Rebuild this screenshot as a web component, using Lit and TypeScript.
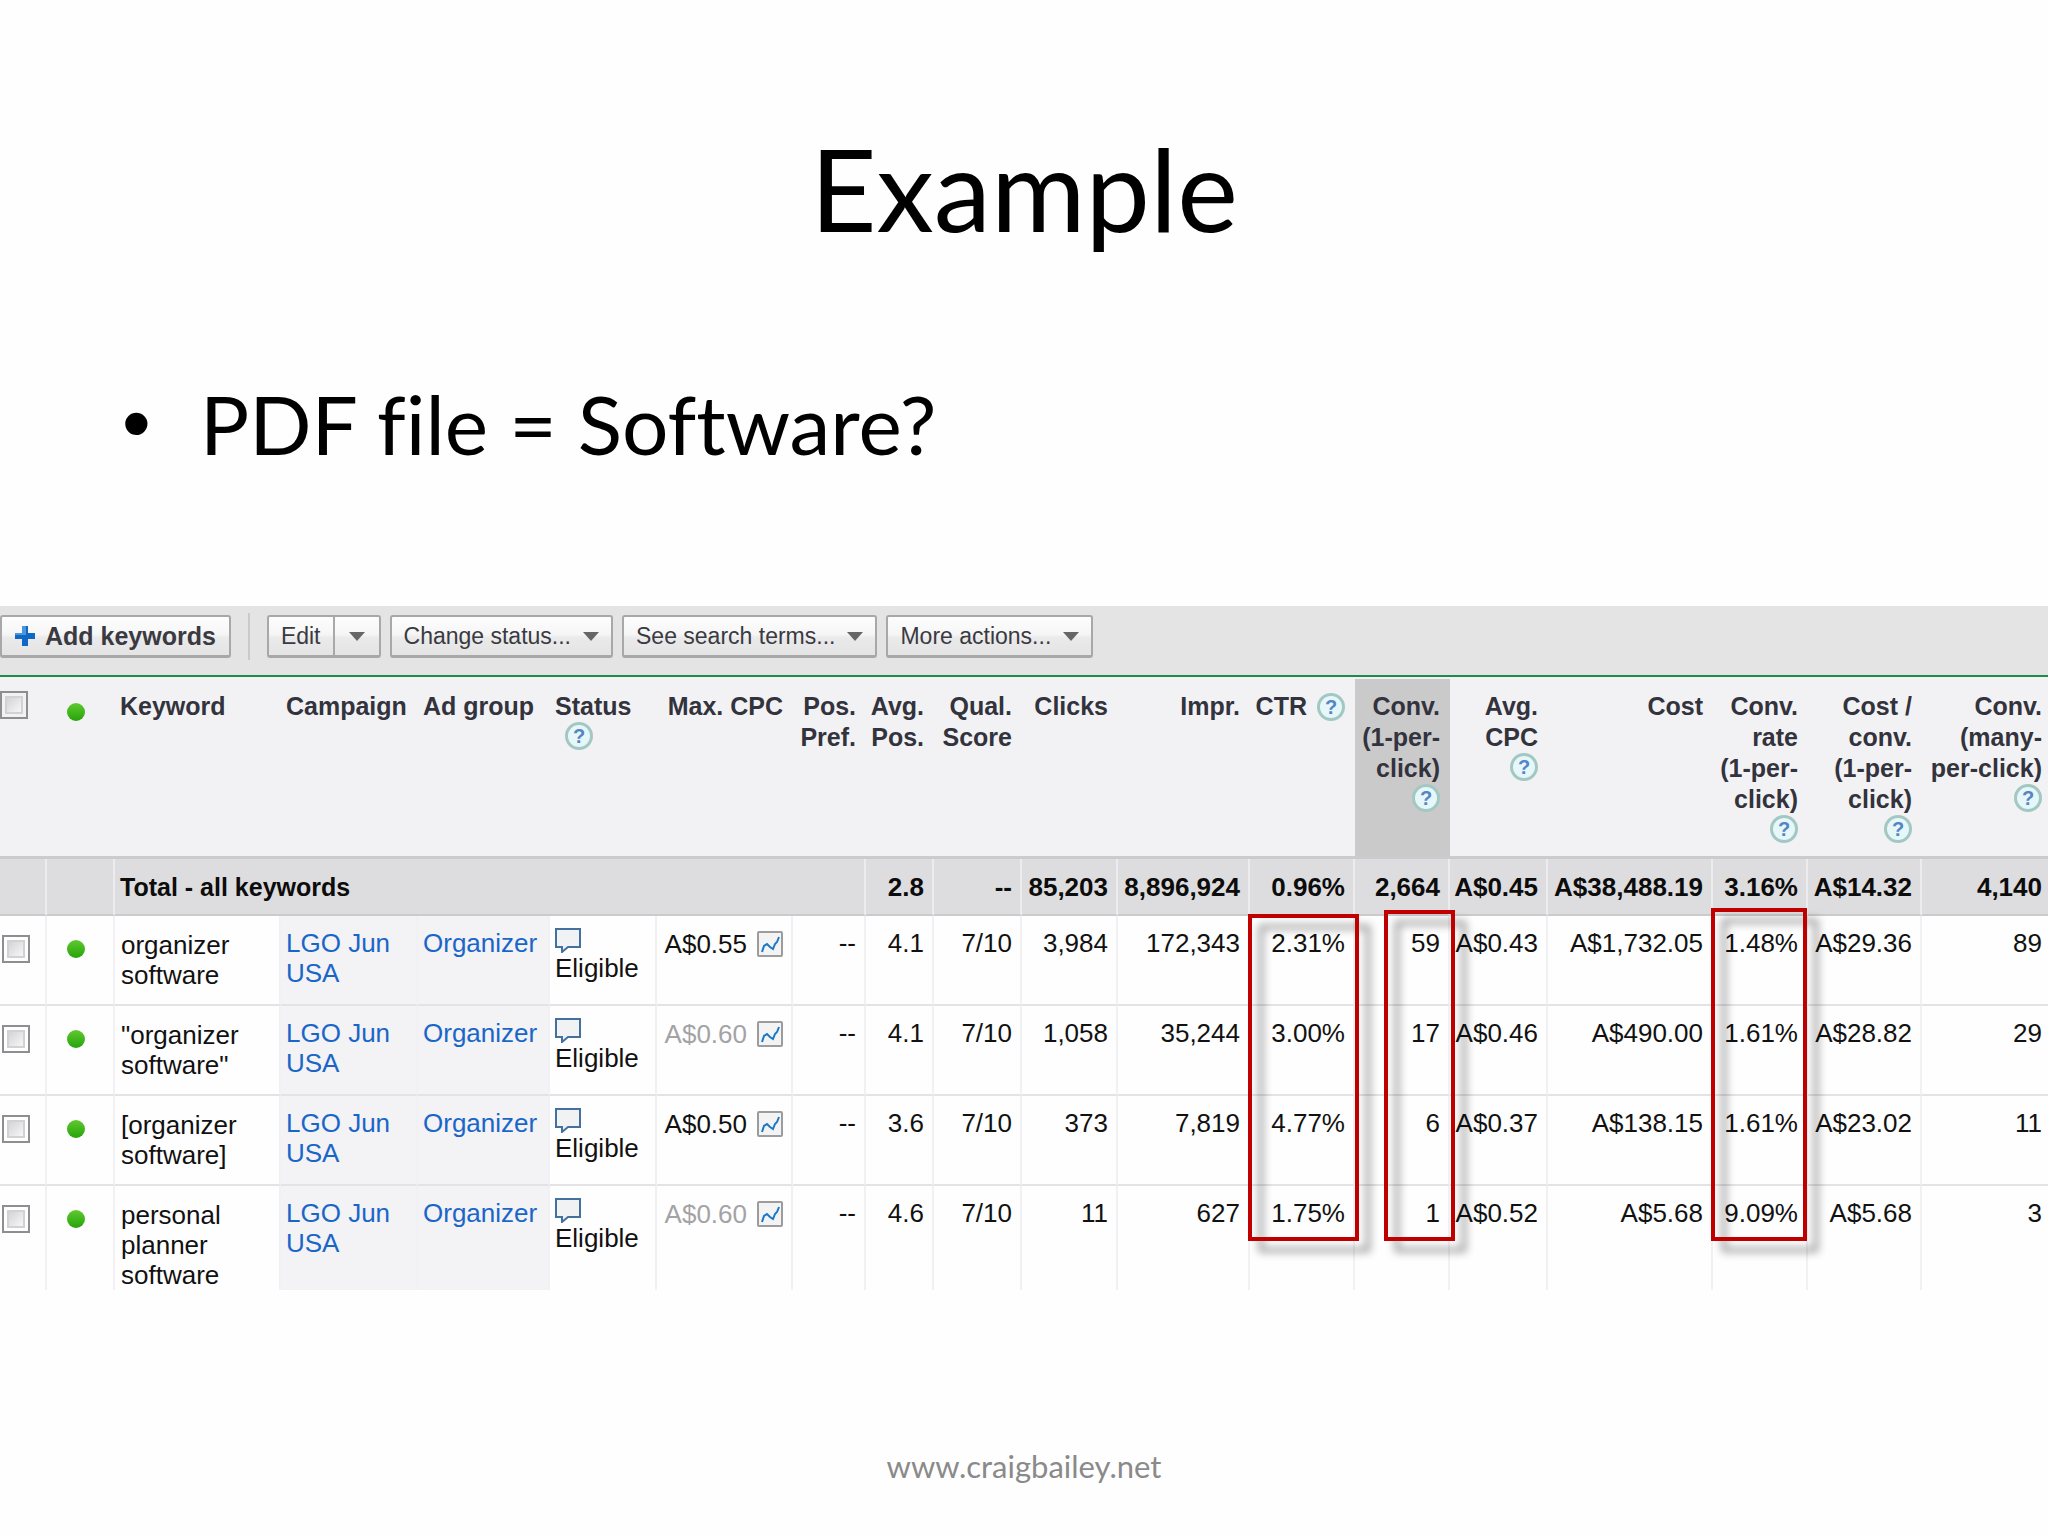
import { LitElement, html, css, svg, nothing } from "lit";
import { customElement } from "lit/decorators.js";
import { classMap } from "lit/directives/class-map.js";

interface Column {
  width: number;
  lines: string[];
  help?: "inline" | "below";
  kind: "check" | "dot" | "text" | "num";
  sorted?: boolean;
}

interface Row {
  keyword: string;
  bid: string;
  inherited: boolean;
  values: string[];
}

const COLUMNS: Column[] = [
  { width: 47, lines: [], kind: "check" },
  { width: 68, lines: [], kind: "dot" },
  { width: 166, lines: ["Keyword"], kind: "text" },
  { width: 137, lines: ["Campaign"], kind: "text" },
  { width: 132, lines: ["Ad group"], kind: "text" },
  { width: 107, lines: ["Status"], kind: "text", help: "below" },
  { width: 136, lines: ["Max. CPC"], kind: "num" },
  { width: 73, lines: ["Pos.", "Pref."], kind: "num" },
  { width: 68, lines: ["Avg.", "Pos."], kind: "num" },
  { width: 88, lines: ["Qual.", "Score"], kind: "num" },
  { width: 96, lines: ["Clicks"], kind: "num" },
  { width: 132, lines: ["Impr."], kind: "num" },
  { width: 105, lines: ["CTR"], kind: "num", help: "inline" },
  { width: 95, lines: ["Conv.", "(1-per-", "click)"], kind: "num", help: "below", sorted: true },
  { width: 98, lines: ["Avg.", "CPC"], kind: "num", help: "below" },
  { width: 165, lines: ["Cost"], kind: "num" },
  { width: 95, lines: ["Conv.", "rate", "(1-per-", "click)"], kind: "num", help: "below" },
  { width: 114, lines: ["Cost /", "conv.", "(1-per-", "click)"], kind: "num", help: "below" },
  { width: 126, lines: ["Conv.", "(many-", "per-click)"], kind: "num", help: "below" },
];

const TOTALS = ["2.8", "--", "85,203", "8,896,924", "0.96%", "2,664", "A$0.45", "A$38,488.19", "3.16%", "A$14.32", "4,140"];

const ROWS: Row[] = [
  {
    keyword: "organizer software",
    bid: "A$0.55",
    inherited: false,
    values: ["--", "4.1", "7/10", "3,984", "172,343", "2.31%", "59", "A$0.43", "A$1,732.05", "1.48%", "A$29.36", "89"],
  },
  {
    keyword: '"organizer software"',
    bid: "A$0.60",
    inherited: true,
    values: ["--", "4.1", "7/10", "1,058", "35,244", "3.00%", "17", "A$0.46", "A$490.00", "1.61%", "A$28.82", "29"],
  },
  {
    keyword: "[organizer software]",
    bid: "A$0.50",
    inherited: false,
    values: ["--", "3.6", "7/10", "373", "7,819", "4.77%", "6", "A$0.37", "A$138.15", "1.61%", "A$23.02", "11"],
  },
  {
    keyword: "personal planner software",
    bid: "A$0.60",
    inherited: true,
    values: ["--", "4.6", "7/10", "11", "627", "1.75%", "1", "A$0.52", "A$5.68", "9.09%", "A$5.68", "3"],
  },
];

/* Value index -> class of the red frame that starts in the first row. */
const MARKS: Record<number, string> = { 5: "mark-ctr", 6: "mark-conv", 9: "mark-rate" };

@customElement("keyword-toolbar")
export class KeywordToolbar extends LitElement {
  static styles = css`
    :host {
      display: flex;
      align-items: center;
      gap: 9px;
      height: 69px;
      box-sizing: border-box;
      padding-bottom: 8px;
      background: #e4e4e4;
    }
    button {
      display: flex;
      align-items: center;
      gap: 12px;
      height: 43px;
      box-sizing: border-box;
      margin: 0;
      padding: 0 12px;
      border: 2px solid #a8a8a8;
      border-bottom-width: 3px;
      border-radius: 3px;
      background: linear-gradient(#fdfdfd, #f6f6f6 45%, #eaeaea 55%, #e4e4e4);
      color: #3a3a42;
      font: 23px "Liberation Sans", Arial, sans-serif;
      white-space: nowrap;
    }
    .add {
      gap: 10px;
      padding: 0 13px;
      font-size: 25px;
      font-weight: bold;
    }
    .divider {
      width: 2px;
      height: 47px;
      margin: 0 8px;
      background: #cacaca;
    }
    .split {
      display: flex;
    }
    .split .main {
      border-radius: 3px 0 0 3px;
    }
    .split .drop {
      padding: 0 14px;
      border-left: 0;
      border-radius: 0 3px 3px 0;
    }
    svg {
      display: block;
      flex: none;
    }
  `;

  private arrow() {
    return html`<svg width="16" height="9" viewBox="0 0 16 9" aria-hidden="true"><path d="M0 0H16L8 9Z" fill="#666"></path></svg>`;
  }

  render() {
    return html`
      <button class="add" type="button">
        <svg width="20" height="20" viewBox="0 0 20 20" aria-hidden="true">
          <path d="M7 0H13V7H20V13H13V20H7V13H0V7H7Z" fill="#1167c4"></path>
          <path d="M7 0H11V9H0V7H7Z" fill="#4a96dc"></path>
        </svg>
        Add keywords
      </button>
      <span class="divider"></span>
      <div class="split">
        <button class="main" type="button">Edit</button>
        <button class="drop" type="button" aria-label="Edit options">${this.arrow()}</button>
      </div>
      ${["Change status...", "See search terms...", "More actions..."].map(
        (label) => html`<button type="button">${label}${this.arrow()}</button>`
      )}
    `;
  }
}

@customElement("keyword-table")
export class KeywordTable extends LitElement {
  static styles = css`
    :host {
      display: block;
      border-top: 2px solid #1f8a4c;
      font-family: "Liberation Sans", Arial, sans-serif;
      font-size: 26px;
      line-height: 30px;
      color: #111;
    }
    table {
      width: 100%;
      table-layout: fixed;
      border-collapse: separate;
      border-spacing: 0;
    }
    th,
    td {
      box-sizing: border-box;
      padding: 12px 8px 0 5px;
      vertical-align: top;
      text-align: left;
      font-weight: normal;
    }
    .num {
      padding-left: 0;
      text-align: right;
      white-space: nowrap;
    }
    thead th {
      height: 182px;
      padding-right: 10px;
      border-top: 2px solid #f2f2f4;
      border-bottom: 3px solid #cbcacc;
      background: #f2f2f4;
      color: #33333d;
      font-size: 25px;
      font-weight: bold;
      line-height: 31px;
      white-space: nowrap;
    }
    thead .sorted {
      background: #cacacb;
    }
    tr > :last-child {
      padding-right: 6px;
    }
    .total th,
    .total td {
      height: 57px;
      padding-top: 0;
      vertical-align: middle;
      border-right: 2px solid #ececee;
      border-bottom: 2px solid #cbcacc;
      background: #dddcde;
      font-weight: bold;
      color: #0c0c0c;
    }
    .total .label {
      font-size: 25px;
    }
    .row td {
      height: 90px;
      border-right: 2px solid #f1f0f3;
      border-bottom: 2px solid #e3e2e5;
    }
    .row:last-child td {
      height: 102px;
      border-bottom: 0;
    }
    .row td:last-child,
    .total td:last-child {
      border-right: 0;
    }
    .row .check {
      padding: 19px 0 0 2px;
    }
    thead .check {
      padding-left: 0;
      padding-right: 0;
    }
    .row .dot,
    thead .dot {
      padding: 24px 0 0 20px;
    }
    .row .link {
      background: #f3f2f5;
    }
    .row .keyword {
      padding: 14px 30px 0 6px;
    }
    .row .bid {
      padding-top: 14px;
    }
    .bid div {
      display: flex;
      align-items: center;
      justify-content: flex-end;
      gap: 10px;
      line-height: 28px;
    }
    .inherited {
      color: #a3a3a6;
    }
    a {
      color: #1a66c8;
      text-decoration: none;
    }
    input {
      appearance: none;
      display: block;
      width: 28px;
      height: 28px;
      box-sizing: border-box;
      margin: 0;
      border: 2px solid #8e8e90;
      background: linear-gradient(135deg, #cfcfd2, #fbfbfb) content-box;
      padding: 3px;
      outline: 2px solid #d2d2d4;
      outline-offset: -7px;
    }
    .light {
      display: block;
      width: 18px;
      height: 18px;
      border-radius: 50%;
      background: linear-gradient(#5fc92f, #27a30c);
    }
    .help {
      display: block;
      width: 28px;
      height: 28px;
      box-sizing: border-box;
      margin: 0;
      padding: 0;
      border: 3px solid #a3c8c4;
      border-radius: 50%;
      background: #e6f7fa;
      color: #5585c4;
      font: bold 20px/22px "Liberation Sans", Arial, sans-serif;
      text-align: center;
    }
    .inline {
      display: flex;
      align-items: center;
      justify-content: flex-end;
      gap: 10px;
    }
    .below {
      display: flex;
      justify-content: flex-end;
    }
    .text .below {
      justify-content: flex-start;
      padding-left: 10px;
    }
    svg {
      display: block;
      flex: none;
    }
    .marked {
      position: relative;
    }
    .mark {
      position: absolute;
      z-index: 1;
      box-sizing: border-box;
      border: 4px solid #c00000;
      filter: drop-shadow(11px 11px 4px rgba(0, 0, 0, 0.45));
      pointer-events: none;
    }
    .mark-ctr {
      top: -2px;
      left: -2px;
      right: -6px;
      height: 327px;
    }
    .mark-conv {
      top: -6px;
      left: 29px;
      right: -7px;
      height: 331px;
    }
    .mark-rate {
      top: -8px;
      left: -2px;
      right: -1px;
      height: 333px;
    }
  `;

  private help(label: string) {
    return html`<button class="help" type="button" aria-label="Help: ${label}">?</button>`;
  }

  private bubble() {
    return html`<svg width="26" height="25" viewBox="0 0 26 25" aria-hidden="true">
      <path d="M1 1H25V19H13L7 24V19H1Z" fill="#f1f2f3" stroke="#44709f" stroke-width="2"></path>
    </svg>`;
  }

  private chart() {
    return html`<svg width="26" height="26" viewBox="0 0 26 26" aria-hidden="true">
      <rect x="1" y="1" width="24" height="24" rx="1" fill="#f3f3f4" stroke="#9c9c9e" stroke-width="2"></rect>
      ${svg`<path d="M5 21L7 15L10 13L13 16L16 18L18 13L20 11L22 6" fill="none" stroke="#1a78c8" stroke-width="2"></path>`}
    </svg>`;
  }

  private heading(c: Column) {
    const name = c.lines.join(" ");
    if (c.kind === "check") return html`<input type="checkbox" aria-label="Select all keywords" />`;
    if (c.kind === "dot") return html`<span class="light"></span>`;
    if (c.help === "inline") return html`<div class="inline">${name}${this.help(name)}</div>`;
    return html`${c.lines.map((l) => html`<div>${l}</div>`)}${c.help ? html`<div class="below">${this.help(name)}</div>` : nothing}`;
  }

  private row(r: Row, first: boolean) {
    return html`<tr class="row">
      <td class="check"><input type="checkbox" aria-label=${r.keyword} /></td>
      <td class="dot"><span class="light"></span></td>
      <td class="keyword">${r.keyword}</td>
      <td class="link"><a href="#campaign">LGO Jun USA</a></td>
      <td class="link"><a href="#adgroup">Organizer</a></td>
      <td>${this.bubble()}Eligible</td>
      <td class="num bid"><div class=${classMap({ inherited: r.inherited })}>${r.bid}${this.chart()}</div></td>
      ${r.values.map((v, i) => {
        const mark = first ? MARKS[i] : undefined;
        return html`<td class=${classMap({ num: true, marked: !!mark })}>${v}${mark ? html`<span class="mark ${mark}"></span>` : nothing}</td>`;
      })}
    </tr>`;
  }

  render() {
    return html`<table>
      <colgroup>
        ${COLUMNS.map((c) => html`<col style="width:${c.width}px" />`)}
      </colgroup>
      <thead>
        <tr>
          ${COLUMNS.map((c) => html`<th scope="col" class=${classMap({ [c.kind]: true, sorted: !!c.sorted })}>${this.heading(c)}</th>`)}
        </tr>
      </thead>
      <tbody>
        <tr class="total">
          <td></td>
          <td></td>
          <th class="label" scope="row" colspan="6">Total - all keywords</th>
          ${TOTALS.map((v) => html`<td class="num">${v}</td>`)}
        </tr>
        ${ROWS.map((r, i) => this.row(r, i === 0))}
      </tbody>
    </table>`;
  }
}

@customElement("app-root")
export class AppRoot extends LitElement {
  static styles = css`
    :host {
      display: flex;
      flex-direction: column;
      min-height: 100vh;
      box-sizing: border-box;
      padding-bottom: 50px;
      overflow-x: hidden;
      background: #fefefe;
      color: #000;
      font-family: Lato, Carlito, sans-serif;
      font-variant-ligatures: none;
    }
    h1 {
      margin: 0;
      padding-top: 117px;
      text-align: center;
      font-size: 115px;
      line-height: 140px;
      font-weight: normal;
    }
    ul {
      display: flex;
      flex-direction: column;
      margin: 0;
      padding: 116px 122px 0;
      list-style: none;
      font-size: 82px;
      line-height: 100px;
    }
    li {
      display: flex;
      gap: 48px;
    }
    .bullet {
      width: 30px;
      font-family: "Liberation Sans", Arial, sans-serif;
    }
    .report {
      padding-top: 133px;
    }
    footer {
      margin-top: auto;
      text-align: center;
      font-size: 31px;
      line-height: 40px;
      color: #8a8a8a;
    }
  `;

  render() {
    return html`
      <h1>Example</h1>
      <ul>
        <li><span class="bullet">•</span><span>PDF file = Software?</span></li>
      </ul>
      <section class="report">
        <keyword-toolbar></keyword-toolbar>
        <keyword-table></keyword-table>
      </section>
      <footer>www.craigbailey.net</footer>
    `;
  }
}
